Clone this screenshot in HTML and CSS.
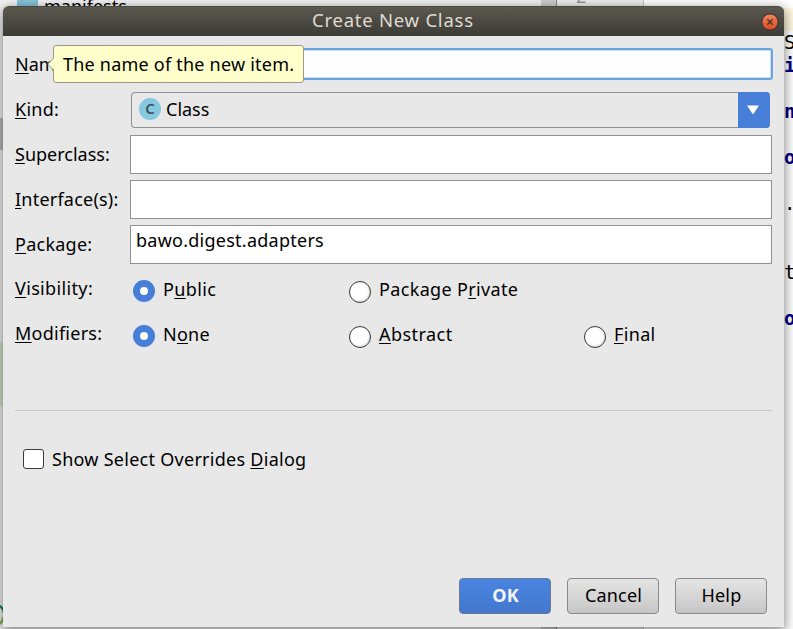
FILE: index.html
```html
<!DOCTYPE html>
<html lang="en">
<head>
<meta charset="utf-8">
<title>Create New Class</title>
<link rel="stylesheet" href="styles.css">
</head>
<body>
<div class="backdrop">
  <div class="tree"><span class="folder"></span><span class="tree-name">manifests</span></div>
  <div class="scrollbar"></div>
  <div class="gutter">2</div>
  <div class="editor"><div class="caret-line"></div><pre class="code">S
<b>i</b>

<b>n</b>

<b>o</b>

.


t

<b>o</b></pre></div>
  <div class="edge-thumb"></div>
  <div class="edge-green"></div>
  <svg class="edge-icon" width="4" height="24" viewBox="0 0 4 24"><path d="M-3 3Q3 4 4 11" fill="none" stroke="#158a56" stroke-width="2.2"/><path d="M4 14Q3 20-2 23" fill="none" stroke="#80ad45" stroke-width="2.2"/></svg>
</div>
<main class="dialog">
  <header class="titlebar"><h1 class="title">Create New Class</h1>
    <svg class="close" width="18" height="18" viewBox="0 0 18 18"><defs><linearGradient id="cg" x2="0" y2="1"><stop stop-color="#f58463"/><stop offset="1" stop-color="#dd4918"/></linearGradient></defs><circle cx="9" cy="9" r="8.1" fill="url(#cg)" stroke="#35332e" stroke-width="1"/><path d="M6.3 6.3l5.4 5.4M11.7 6.3l-5.4 5.4" stroke="#40352b" stroke-width="1.4"/></svg>
  </header>
  <div class="content">
    <div class="form">
      <label class="label"><span class="t-name"><u>N</u>ame:</span></label><div class="input focused"></div>
      <label class="label"><span class="t-kind"><u>K</u>ind:</span></label>
      <div class="combo"><span class="class-icon">C</span><span class="t-class">Class</span><span class="arrow"><svg width="12" height="10" viewBox="0 0 12 10"><path d="M0 .5h12L6 9.5z" fill="#fff"/></svg></span></div>
      <label class="label"><span class="t-super"><u>S</u>uperclass:</span></label><div class="input"></div>
      <label class="label"><span class="t-inter"><u>I</u>nterface(s):</span></label><div class="input"></div>
      <label class="label"><span class="t-pack"><u>P</u>ackage:</span></label><div class="input"><span class="t-bawo">bawo.digest.adapters</span></div>
      <label class="label raised"><span class="t-vis"><u>V</u>isibility:</span></label>
      <div class="radios"><label class="radio"><i class="dot on"></i><span class="t-public">P<u>u</u>blic</span></label><label class="radio"><i class="dot"></i><span class="t-pp">Package P<u>r</u>ivate</span></label></div>
      <label class="label raised"><span class="t-mod"><u>M</u>odifiers:</span></label>
      <div class="radios"><label class="radio"><i class="dot on"></i><span class="t-none">N<u>o</u>ne</span></label><label class="radio"><i class="dot"></i><span class="t-abs"><u>A</u>bstract</span></label><label class="radio"><i class="dot"></i><span class="t-final"><u>F</u>inal</span></label></div>
    </div>
    <hr class="rule">
    <label class="check"><i class="box"></i><span class="t-show">Show Select Overrides <u>D</u>ialog</span></label>
    <footer class="buttons"><button class="btn primary">OK</button><button class="btn">Cancel</button><button class="btn">Help</button></footer>
  </div>
  <div class="tooltip"><svg class="beak" width="7" height="12" viewBox="0 0 7 12"><path d="M7 0L1 6l6 6z" fill="#ffffcc"/><path d="M6.5 0L.7 6l5.8 6" fill="none" stroke="#9c9c8c"/></svg><span class="t-tip">The name of the new item.</span></div>
</main>
</body>
</html>
```
FILE: styles.css
```css
* { box-sizing: border-box; }
body { margin: 0; width: 793px; height: 629px; overflow: hidden; position: relative; font: 18px/24px "Noto Sans", sans-serif; color: #000; }
u { text-decoration: underline; text-decoration-thickness: 1px; text-underline-offset: 2px; text-decoration-skip-ink: none; }
.backdrop { position: absolute; inset: 0; display: flex; background: #fff; }
.tree { width: 541px; flex: none; display: flex; padding-left: 17px; background: #f3f3f3; }
.folder { width: 21px; height: 12px; background: #87c5da; margin-right: 6px; }
.tree-name { margin-top: -6px; }
.scrollbar { width: 16px; flex: none; background: #cfcfcf; border-right: 1px solid #888; }
.gutter { width: 87px; flex: none; height: 660px; margin-top: -16px; background: #eee; border-right: 1px solid #c4c4c4; padding-left: 19px; color: #999; }
.editor { flex: 1; padding-top: 8px; }
.caret-line { height: 23px; background: #fff8df; }
.code { margin: 0 0 0 140px; font: 19px/23px "DejaVu Sans Mono", monospace; overflow: hidden; }
.code b { color: #000080; }
.edge-thumb, .edge-green, .edge-icon { position: absolute; left: 0; width: 4px; }
.edge-thumb { top: 118px; height: 32px; background: #bcbcbc; }
.edge-green { top: 342px; height: 64px; background: #d5e5cb; }
.edge-icon { top: 602px; }
.dialog { position: absolute; left: 3px; top: 6px; width: 781px; height: 621px; background: #e8e8e8; border-radius: 6px 6px 0 0; box-shadow: 0 3px 12px 1px rgba(0,0,0,.48); display: flex; flex-direction: column; }
.titlebar { height: 30px; flex: none; border-radius: 6px 6px 0 0; background: linear-gradient(#5b584e, #3d3b37); display: flex; align-items: center; padding-right: 5px; border-top: 1px solid #49473f; }
.title { margin: 0; padding: 0 0 3px 309px; font-size: 18.5px; font-weight: 400; line-height: 26px; letter-spacing: .75px; color: #dfdbd2; white-space: nowrap; flex: 1; }
.content { flex: 1; display: flex; flex-direction: column; padding: 6px 12px 13px; }
.form { display: grid; grid-template-columns: 115px 642px; grid-template-rows: repeat(7, 45px); align-items: center; }
.label { white-space: nowrap; padding-bottom: 2px; }
.raised { margin-bottom: 2px; }
.input { height: 39px; background: #fff; border: 1px solid #919191; padding: 2px 5px; }
.focused { height: 32px; margin: 0 -1px 2px -1px; border: 2px solid #6ba4e0; border-radius: 3px; box-shadow: inset 0 0 0 1px #c9def5; }
.combo { height: 36px; margin: 0 2px 0 1px; border: 1px solid #919191; border-right: 0; border-radius: 4px; display: flex; align-items: center; padding-left: 7px; }
.class-icon { width: 22px; height: 22px; border-radius: 50%; background: #85c8df; color: #3b5059; font: 600 15px/21px "Noto Sans", sans-serif; text-align: center; margin: -2px 5px 0 0; }
.t-class { flex: 1; padding-bottom: 2px; }
.arrow { width: 32px; height: 36px; background: #477ed8; border-radius: 0 4px 4px 0; display: flex; align-items: center; justify-content: center; padding-right: 2px; }
.radios { display: grid; grid-template-columns: 216px 235px 1fr; padding-left: 3px; }
.radio { display: flex; align-items: center; gap: 8px; white-space: nowrap; }
.radio span { padding-bottom: 2px; }
.dot { width: 22px; height: 22px; border-radius: 50%; border: 1px solid #373737; background: #fff; box-shadow: inset -1px -1px 2px #ddd; margin-top: 4px; }
.dot.on { border: 7px solid #477ed8; box-shadow: none; margin-top: 2px; }
.rule { width: 757px; margin: 53px 0 0; border: 0; border-top: 1px solid #c9c9c9; }
.check { display: flex; align-items: center; gap: 8px; margin: 36px 0 0 8px; height: 24px; }
.box { width: 21px; height: 20px; border: 1px solid #3b3b3b; border-radius: 3px; background: #fff; }
.buttons { margin-top: auto; display: flex; justify-content: flex-end; gap: 16px; padding-right: 5px; }
.btn { width: 92px; height: 36px; padding: 0 0 2px 1px; border: 1px solid #888; border-radius: 4px; background: linear-gradient(#e5e5e5, #c6c6c6); font: 18px/24px "Noto Sans", sans-serif; letter-spacing: .2px; color: #000; }
.primary { background: linear-gradient(#4984e1, #4278cd); border-color: #6b7890; color: #f3f3f3; font-weight: 700; }
.tooltip { position: absolute; left: 50px; top: 39px; width: 251px; height: 38px; border: 1px solid #999a8c; border-radius: 3px; background: #ffffcc; padding: 6px 9px; white-space: nowrap; }
.beak { position: absolute; left: -7px; top: 12px; }
.t-kind, .t-pack, .t-bawo, .t-none, .t-mod { letter-spacing: .25px; }
.t-show { letter-spacing: .27px; }
.t-tip, .t-inter { letter-spacing: .22px; }
.t-vis, .t-pp, .t-public, .t-final { letter-spacing: .35px; }
.t-abs { letter-spacing: .45px; }
```
